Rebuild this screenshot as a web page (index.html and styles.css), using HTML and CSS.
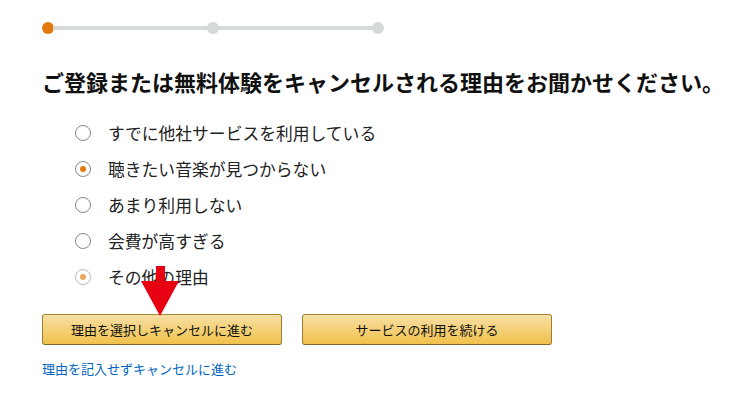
FILE: index.html
```html
<!doctype html>
<html lang="ja">
<head>
<meta charset="UTF-8">
<title>キャンセル理由</title>
<link rel="stylesheet" href="styles.css">
</head>
<body>
	<div class="page">
		<div class="steps">
			<span class="dot on"></span>
			<span class="bar"></span>
			<span class="dot"></span>
			<span class="bar"></span>
			<span class="dot"></span>
		</div>

		<h1 class="title">ご登録または無料体験をキャンセルされる理由をお聞かせください。</h1>

		<ul class="reasons">
			<li><span class="radio"></span>すでに他社サービスを利用している</li>
			<li><span class="radio checked"></span>聴きたい音楽が見つからない</li>
			<li><span class="radio"></span>あまり利用しない</li>
			<li><span class="radio"></span>会費が高すぎる</li>
			<li><span class="radio checked faded"></span>その他の理由</li>
		</ul>

		<div class="buttons">
			<button class="btn btn_cancel">理由を選択しキャンセルに進む</button>
			<button class="btn btn_keep">サービスの利用を続ける</button>
		</div>

		<a class="skip" href="#">理由を記入せずキャンセルに進む</a>

		<!-- 注目矢印 -->
		<svg class="arrow" width="40" height="52" viewBox="0 0 40 52">
			<polygon points="16,1 25,1 25,16 39,16 20,51 1,16 16,16" fill="#e60012"/>
		</svg>
	</div>
</body>
</html>
```

FILE: styles.css
```css
body{
	margin:0;
	background:#fff;
	font-family:"Noto Sans CJK JP","Noto Sans",sans-serif;
	color:#111;
}
.page{
	position:relative;
	padding:22px 0 0 42px;
}
.steps{
	width:342px;
	height:12px;
	display:flex;
	align-items:center;
}
.dot{
	width:12px;
	height:12px;
	border-radius:50%;
	background:#d5d9d9;
}
.dot.on{
	background:#e47911;
}
.bar{
	flex:1;
	height:4px;
	margin:0 -1px;
	background:#d5d9d9;
}
.title{
	margin:32px 0 0 0;
	font-size:22px;
	line-height:30px;
	font-weight:bold;
	white-space:nowrap;
	color:#111;
}
.reasons{
	list-style:none;
	margin:19px 0 0 0;
	padding:0 0 0 33px;
}
.reasons li{
	height:36px;
	display:flex;
	align-items:center;
	font-size:16.8px;
	color:#222;
}
.radio{
	width:14px;
	height:14px;
	border:1px solid #888;
	border-radius:50%;
	margin-right:17px;
	display:flex;
	align-items:center;
	justify-content:center;
	flex-shrink:0;
}
.radio.checked::after{
	content:"";
	width:6px;
	height:6px;
	border-radius:50%;
	background:#e47911;
}
.radio.faded{
	border-color:#bbb;
}
.radio.faded::after{
	background:#eca55b;
}
.buttons{
	display:flex;
	gap:20px;
	margin-top:19px;
}
.btn{
	height:31px;
	border:1px solid;
	border-color:#a88734 #9c7e31 #846a29;
	border-radius:3px;
	background:linear-gradient(to bottom,#f7dfa5,#f0c14b);
	font-family:inherit;
	font-size:13px;
	color:#111;
	padding:0;
}
.btn_cancel{
	width:240px;
}
.btn_keep{
	width:250px;
}
.skip{
	display:block;
	margin-top:15px;
	font-size:13px;
	line-height:18px;
	color:#0066c0;
	text-decoration:none;
}
.arrow{
	position:absolute;
	left:140px;
	top:265px;
}
```
